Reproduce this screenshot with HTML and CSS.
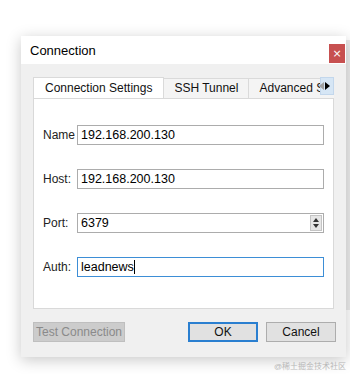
FILE: index.html
```html
<!DOCTYPE html>
<html lang="en">
<head>
  <meta charset="UTF-8" />
  <title>Connection</title>
  <link rel="stylesheet" href="styles.css">
</head>
<body>
  <div class="screen">
    <div class="dialog">
      <div class="titlebar">
        <span class="title">Connection</span>
        <button class="close-btn">&times;</button>
      </div>
      <div class="dialog-body">
        <div class="tabs">
          <div class="tab active">Connection Settings</div>
          <div class="tab">SSH Tunnel</div>
          <div class="tab">Advanced Settings</div>
          <div class="tab-scroll">
            <span class="arrow left"></span>
            <span class="arrow right"></span>
          </div>
        </div>
        <div class="tab-pane">
          <div class="form-grid">
            <label class="field-label">Name</label>
            <div class="field">192.168.200.130</div>

            <label class="field-label">Host:</label>
            <div class="field">192.168.200.130</div>

            <label class="field-label">Port:</label>
            <div class="field spin">
              <span>6379</span>
              <span class="spinner">
                <span class="up"></span>
                <span class="down"></span>
              </span>
            </div>

            <label class="field-label">Auth:</label>
            <div class="field focused">leadnews<span class="caret"></span></div>
          </div>
        </div>
        <div class="button-row">
          <button class="btn disabled">Test Connection</button>
          <div class="btn-group">
            <button class="btn default">OK</button>
            <button class="btn">Cancel</button>
          </div>
        </div>
      </div>
    </div>
    <div class="behind"></div>
  </div>
  <div class="watermark">@稀土掘金技术社区</div>
</body>
</html>
```

FILE: styles.css
```css
* {
  box-sizing: border-box;
}

body {
  margin: 0;
  background-color: #ffffff;
  font-family: "Liberation Sans", "Noto Sans CJK SC", sans-serif;
  font-size: 12px;
  color: #000;
  width: 350px;
  height: 374px;
  overflow: hidden;
  position: relative;
}

.screen {
  display: flex;
  align-items: flex-start;
  padding: 36px 0 0 21px;
}

.behind {
  width: 4px;
  height: 270px;
  margin-top: 4px;
  background-color: #ececec;
}

.dialog {
  width: 325px;
  height: 321px;
  flex-shrink: 0;
  background-color: #f0f0f0;
  box-shadow: 0 3px 14px rgba(0, 0, 0, 0.22);
  display: flex;
  flex-direction: column;
  position: relative;
  z-index: 1;
}

.titlebar {
  height: 28px;
  flex-shrink: 0;
  background-color: #ffffff;
  display: flex;
  align-items: center;
  justify-content: space-between;
  padding: 0 1px 0 9px;
}

.title {
  font-size: 13px;
  margin-top: 1px;
}

.close-btn {
  width: 16px;
  height: 19px;
  margin-top: 6px;
  border: none;
  padding: 0;
  background-color: #c75050;
  color: #fff;
  font-family: "DejaVu Sans", sans-serif;
  font-size: 11px;
  line-height: 19px;
}

.dialog-body {
  padding: 13px 12px 0 12px;
  flex: 1;
}

.tabs {
  display: flex;
  align-items: flex-end;
  height: 21px;
  position: relative;
  overflow: hidden;
}

.tab {
  height: 20px;
  line-height: 19px;
  padding: 0 10px;
  background-color: #f4f4f4;
  border: 1px solid #dadada;
  border-bottom: none;
  border-left: none;
  white-space: nowrap;
  color: #111;
}

.tab.active {
  height: 21px;
  line-height: 21px;
  padding: 0 11px;
  background-color: #ffffff;
  border-left: 1px solid #d9d9d9;
  position: relative;
  z-index: 1;
}

.tab-scroll {
  position: absolute;
  right: 0;
  top: 0;
  width: 14px;
  height: 18px;
  background-color: #d6e6f5;
  border: 1px solid #c3d7ec;
  display: flex;
  align-items: center;
  justify-content: center;
}

.arrow {
  width: 0;
  height: 0;
  border-top: 4px solid transparent;
  border-bottom: 4px solid transparent;
}

.arrow.left {
  border-right: 5px solid #a0a0a0;
  margin-left: -6px;
}

.arrow.right {
  border-left: 5px solid #000;
  margin-left: 1px;
}

.tab-pane {
  height: 211px;
  background-color: #ffffff;
  border: 1px solid #d9d9d9;
  padding: 26px 9px 0 9px;
}

.form-grid {
  display: grid;
  grid-template-columns: 34px 1fr;
  row-gap: 24px;
  align-items: center;
}

.field-label {
  color: #222;
}

.field {
  height: 20px;
  border: 1px solid #acacac;
  padding: 0 3px;
  display: flex;
  align-items: center;
  font-size: 12.5px;
}

.field.spin {
  justify-content: space-between;
  padding-right: 1px;
}

.spinner {
  width: 12px;
  height: 16px;
  background-color: #e6e6e6;
  border: 1px solid #c4c4c4;
  display: flex;
  flex-direction: column;
  align-items: center;
  justify-content: center;
  gap: 2px;
}

.spinner .up {
  border-left: 3px solid transparent;
  border-right: 3px solid transparent;
  border-bottom: 4px solid #333;
}

.spinner .down {
  border-left: 3px solid transparent;
  border-right: 3px solid transparent;
  border-top: 4px solid #333;
}

.field.focused {
  border-color: #3d8ed6;
}

.caret {
  display: inline-block;
  width: 1px;
  height: 14px;
  background-color: #000;
}

.button-row {
  display: flex;
  justify-content: space-between;
  margin-top: 13px;
}

.btn-group {
  display: flex;
  gap: 8px;
  margin-right: -2px;
}

.btn {
  height: 20px;
  width: 70px;
  padding: 0;
  background-color: #e1e1e1;
  border: 1px solid #adadad;
  font-family: "Liberation Sans", sans-serif;
  font-size: 12px;
  color: #111;
}

.btn.default {
  border: 1px solid #2a7fd0;
  box-shadow: inset 0 0 0 1px #2a7fd0;
}

.btn.disabled {
  width: 92px;
  background-color: #cccccc;
  border-color: #bfbfbf;
  color: #8a8a8a;
}

.watermark {
  position: absolute;
  right: 4px;
  bottom: 3px;
  font-size: 8px;
  color: #c2c2c2;
}
```
